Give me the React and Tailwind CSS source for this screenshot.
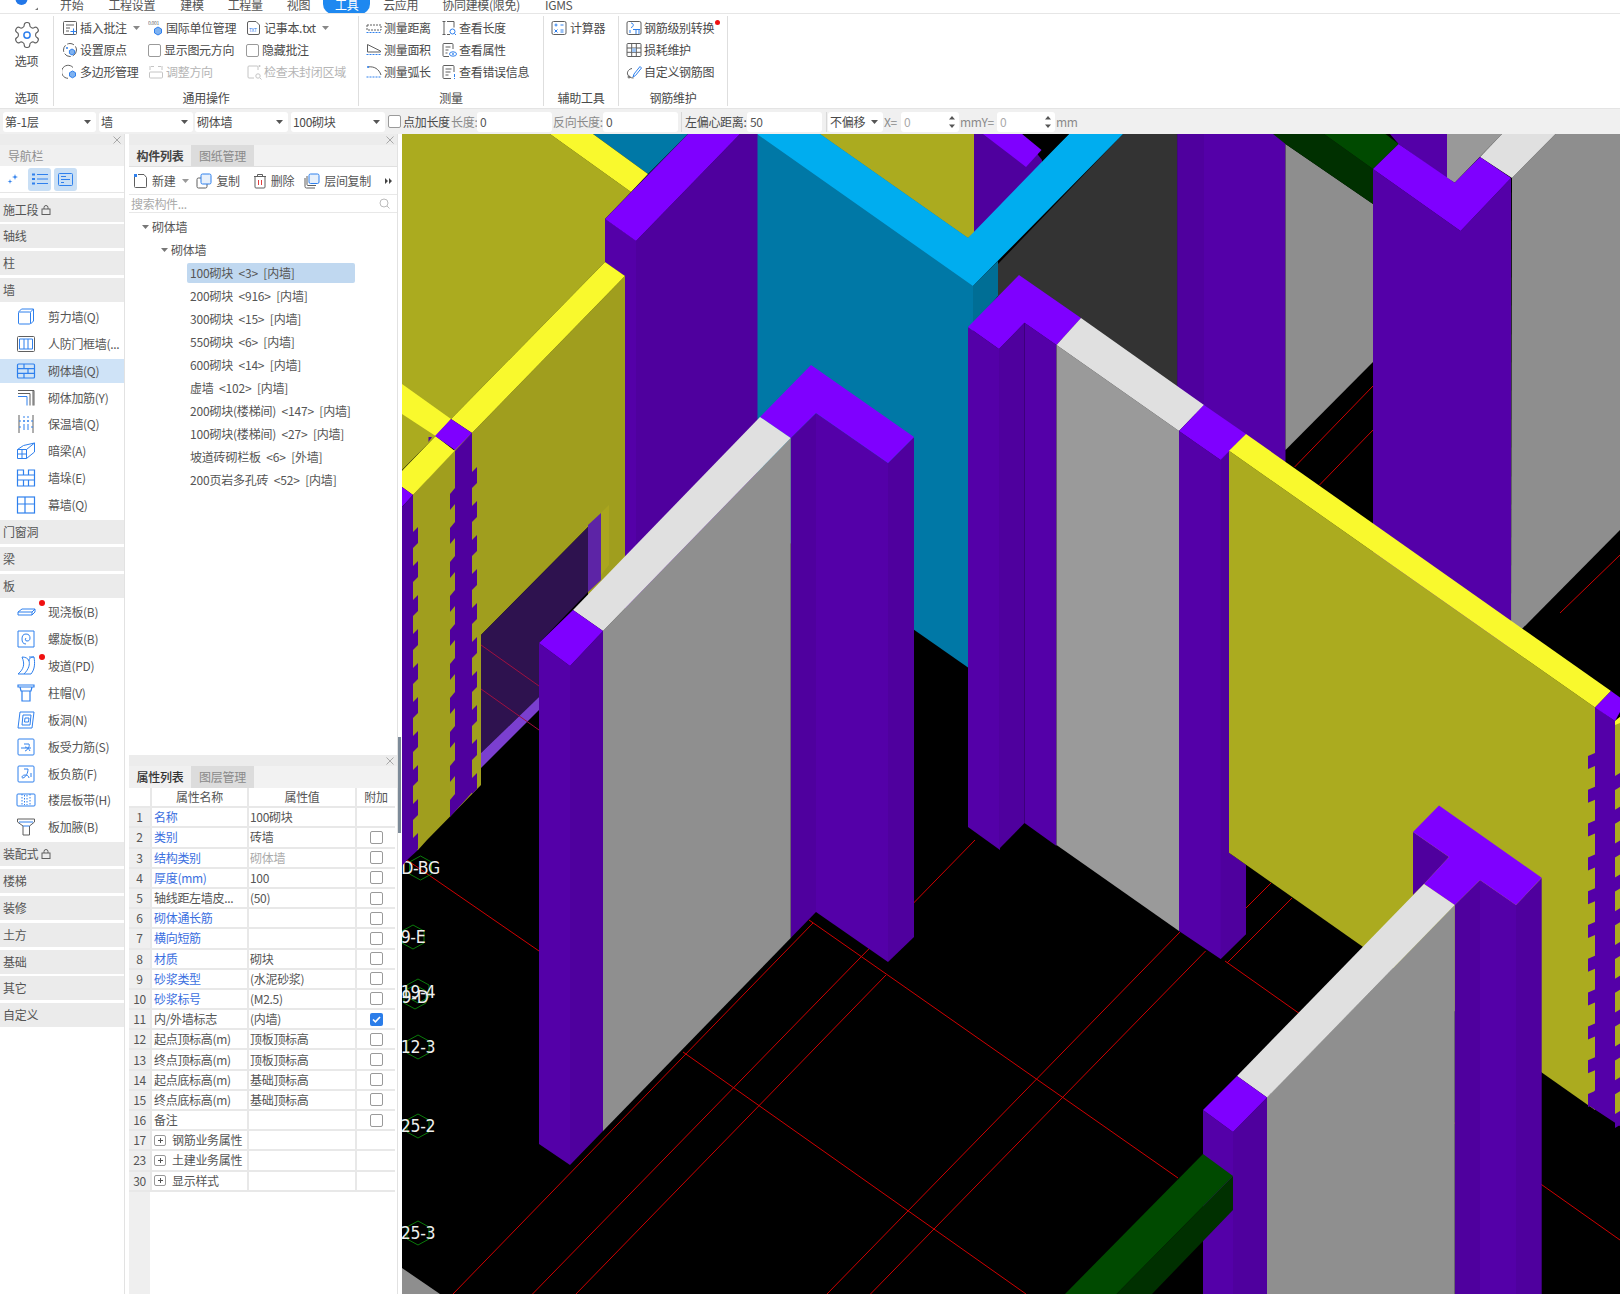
import React from "react";

const B = "#2f80ed";
const G = "#5f5f5f";
const L = "#c4c4c4";
const FONT = { fontFamily: '"Noto Sans CJK SC","Noto Sans",sans-serif' };

const Ic = ({ s = 16, v = 16, children }) => (
  <svg width={s} height={s} viewBox={`0 0 ${v} ${v}`} fill="none" stroke={G} strokeWidth="1" className="shrink-0">
    {children}
  </svg>
);

const Caret = ({ c = "#666" }) => (
  <svg width="7" height="4" viewBox="0 0 7 4" className="shrink-0"><path d="M0 0h7L3.5 4z" fill={c} /></svg>
);

const Box = ({ checked }) =>
  checked ? (
    <span className="w-[13px] h-[13px] rounded-[2px] bg-[#2b7de9] flex items-center justify-center shrink-0">
      <svg width="11" height="11" viewBox="0 0 11 11"><path d="M2 5.5l2.4 2.4L9 3" stroke="#fff" strokeWidth="1.6" fill="none" /></svg>
    </span>
  ) : (
    <span className="block w-[13px] h-[13px] rounded-[2px] border border-[#9a9a9a] bg-white shrink-0" />
  );

/* ribbon icons */
const iNote = <Ic><rect x="1.5" y="1.5" width="13" height="13" rx="1" /><path d="M4 5h8M4 8h4M4 11h3" /><path d="M11.5 8.5v6M8.5 11.5h6" stroke={B} /></Ic>;
const iUnit = <Ic><text x="0" y="5" fontSize="5" fill={G} stroke="none">0.001</text><path d="M10 7l3.5 2v4L10 15l-3.5-2V9z" fill="#7fb2f0" stroke={B} /></Ic>;
const iTxt = <Ic><path d="M3 1.5h7l3.5 3.5v8a1.5 1.5 0 0 1-1.5 1.5H3A1.5 1.5 0 0 1 1.5 13V3A1.5 1.5 0 0 1 3 1.5z" /><text x="3" y="12" fontSize="5" fill={B} stroke="none">TXT</text></Ic>;
const iOrigin = <Ic><circle cx="8" cy="8" r="6.5" strokeDasharray="7 2" /><path d="M10 7l2.6 1.5v3L10 13l-2.6-1.5v-3z" fill="#7fb2f0" stroke={B} /><circle cx="5" cy="6" r="1" fill={B} stroke="none" /></Ic>;
const iPoly = <Ic><path d="M11 3.5A6.5 6.5 0 1 0 6 14.3" /><path d="M10.5 7l3 1.7v3.4l-3 1.7-3-1.7V8.700z" fill="#7fb2f0" stroke={B} /></Ic>;
const iAdjust = <Ic><g stroke={L}><rect x="1.500" y="8" width="13" height="6" rx="1" /><path d="M3 2.500h3M10 2.500h3M2 2v4M14 2v4" /></g></Ic>;
const iCheck = <Ic><g stroke={L}><path d="M12 6v-3a1 1 0 0 0-1-1H3a1 1 0 0 0-1 1v10a1 1 0 0 0 1 1h5" /><circle cx="12" cy="12" r="2.200" /><path d="M14 14l1.500 1.500" /></g><circle cx="13.500" cy="2" r="1" fill={L} stroke="none" /></Ic>;
const iDist = <Ic><rect x="1" y="5" width="14" height="5" stroke={G} strokeDasharray="2 1" /><path d="M0.500 12.500h15" stroke={B} strokeDasharray="2 1" /></Ic>;
const iArea = <Ic><path d="M1.500 10V2.500l13 6.500v1z" /><path d="M0.500 12.500h15" stroke={B} strokeDasharray="2 1" /></Ic>;
const iArc = <Ic><path d="M2 3c6-1 11 2 13 8" /><path d="M0.500 13h15" stroke={B} strokeDasharray="2 1" /><circle cx="2" cy="3" r="1" fill={B} stroke="none" /></Ic>;
const iLen = <Ic><path d="M1.500 1.500h3M3 1.500v13M1.500 14.500h3" /><path d="M6 1.500h7v6M6 14.500h3" /><circle cx="11.500" cy="11.500" r="2.500" stroke={B} /><path d="M13.500 13.500l1.500 1.500" stroke={B} /></Ic>;
const iAttr = <Ic><path d="M12 7V2.500a1 1 0 0 0-1-1H3a1 1 0 0 0-1 1v11a1 1 0 0 0 1 1h5" /><path d="M4.500 5h5M4.500 8h3M4.500 11h2" /><ellipse cx="12" cy="12" rx="3.500" ry="2.200" stroke={B} /><circle cx="12" cy="12" r="0.900" fill={B} stroke="none" /></Ic>;
const iErr = <Ic><path d="M13 8V2.500a1 1 0 0 0-1-1H3a1 1 0 0 0-1 1v11a1 1 0 0 0 1 1h7" /><path d="M4.500 5h6M4.500 8h5M4.500 11h3" /><path d="M13.500 10v3M13.500 14v1" stroke={B} /></Ic>;
const iCalc = <Ic><rect x="1" y="1.500" width="14" height="13" rx="1.500" /><path d="M3.500 5h3M5 3.500v3M9.500 5h3M3.500 9.500l3 3M6.500 9.500l-3 3M9.500 10h3M9.500 12h3" stroke={B} /></Ic>;
const iRebarLv = <Ic><rect x="1" y="1.500" width="14" height="13" rx="1.500" /><path d="M5 3c3 0 3 4 0 4.500M7 9.500h7M4 10v3" stroke={B} /><path d="M10 9v5M13 9v5" stroke={B} /></Ic>;
const iLoss = <Ic><rect x="1" y="1.500" width="14" height="13" rx="1" /><path d="M5.700 1.500v13M10.300 1.500v13M1 6h14M1 10.300h14" /><rect x="6" y="6.300" width="4" height="3.800" fill="#9ec6f5" stroke="none" /></Ic>;
const iCustom = <Ic><path d="M7 13l1-3 6-7.500 1.500 1.500-6 7.500z" stroke={B} /><path d="M6 4.500C3 5 1 7.500 1.500 10c.5 2.500 3 4 6 4" /><circle cx="3" cy="13" r="1" /></Ic>;

const Item = ({ icon, text, off, gap = "gap-[2px]" }) => (
  <div className={`flex items-center h-[22px] whitespace-nowrap ${gap} ${off ? "text-[#b5b5b5]" : "text-[#4a4a4a]"}`}>
    {icon}
    <span>{text}</span>
  </div>
);

const Group = ({ label, w, pl, children }) => (
  <div className={`flex flex-col ${w} border-r border-[#dedede] my-[2px] shrink-0`}>
    <div className={`flex ${pl} pt-[1px] h-[76px]`}>{children}</div>
    <div className="text-center text-[#4a4a4a] leading-[16px] mt-[2px]">{label}</div>
  </div>
);

/* nav icons */
const n = {
  wall: <Ic s={20} v={20}><g stroke={B}><rect x="2.500" y="5" width="12" height="12" rx="1" /><path d="M2.500 5l3-3h12v12l-3 3M17.500 2l-3 3" /></g></Ic>,
  frame: <Ic s={20} v={20}><rect x="1.500" y="2.500" width="17" height="15" rx="1" /><path d="M3.500 5h13v10h-13zM8 5v10M12 5v10" stroke={B} /></Ic>,
  brick: <Ic s={20} v={20}><g stroke={B} strokeWidth="1.200"><rect x="1.500" y="3" width="17" height="14" rx="1" /><path d="M1.500 7.700h17M1.500 12.300h17M8 3v4.700M12 7.700v4.600M8 12.300V17" /></g></Ic>,
  bars: <Ic s={20} v={20}><path d="M2 2.500h15v15M2 5.500h12v12" /><path d="M2 8.500h9v9" stroke={B} /><path d="M17 2.500h1v15" /></Ic>,
  ins: <Ic s={20} v={20}><path d="M3 1v18M17 1v18" /><path d="M8 2v16M12 2v16M3 7h14M3 13h14" stroke={B} strokeDasharray="2 2" /></Ic>,
  beam: <Ic s={20} v={20}><path d="M1.500 8.500v9h9v-9h-9zM1.500 8.500l6-4 11-2.500v9l-8 6.500M10.500 8.500l8-6.500M1.500 13h9M6 8.500v9" stroke={B} /></Ic>,
  pier: <Ic s={20} v={20}><g stroke={B} strokeWidth="1.200"><path d="M1.500 2v16h17V2h-6v5h-5V2zM1.500 7h6M12.500 7h6v5h-17M7.500 12v6M12.500 12v6" /></g></Ic>,
  curtain: <Ic s={20} v={20}><g stroke={B} strokeWidth="1.200"><rect x="1.500" y="2" width="17" height="16" /><path d="M1.500 9h17M9 2v16" /></g></Ic>,
  slab: <Ic s={20} v={20}><path d="M2 10l4-3h13v3l-3 3H2zM2 10h14v3M16 10l3-3" stroke={B} /></Ic>,
  spiral: <Ic s={20} v={20}><path d="M2 2h16v16H2z" stroke={B} /><path d="M10 15c-3 0-4-2-4-5s1-5 4-5 4 2 4 4-1 3-3 3-2-2-1-3" stroke={B} /></Ic>,
  ramp: <Ic s={20} v={20}><path d="M6 1c3 0 6 1 7 4s0 8-5 13H2c6-5 7-10 4-17zM13 1h5c1 6 1 12-3 17H8M18 1c-1 0-5 0-5 4" stroke={B} /></Ic>,
  cap: <Ic s={20} v={20}><path d="M2 2h16v2H2zM4 4l1 4h10l1-4M6 8v10h8V8" stroke={B} strokeWidth="1.200" /></Ic>,
  hole: <Ic s={20} v={20}><path d="M4 2h14l-2 16H2zM7 5h8l-1 10H6zM9 8h4l-.5 4H8.500z" stroke={B} /></Ic>,
  rebar1: <Ic s={20} v={20}><rect x="2" y="2" width="16" height="16" rx="1" stroke={B} /><path d="M5 11h10M8 7h5c1 2-1 6-4 7M9 10c2 0 4 2 5 4" stroke={B} /></Ic>,
  rebar2: <Ic s={20} v={20}><rect x="2" y="2" width="16" height="16" rx="1" stroke={B} /><path d="M8 5h4c0 4-2 8-5 9-2 0-1-3 2-3 2 0 4 1 4 3M15 9v4" stroke={B} /></Ic>,
  strip: <Ic s={20} v={20}><rect x="1" y="4" width="18" height="12" rx="1" stroke={B} /><path d="M6 4v12M14 4v12M8.500 5v10M11 5v10" stroke={B} strokeDasharray="1.500 1.500" /></Ic>,
  haunch: <Ic s={20} v={20}><path d="M1.500 2h17v3l-5 4v9H7V9L1.500 5z" /><path d="M7 9h6.500M3 5h14" stroke={B} /></Ic>,
};

const Lock = () => (
  <Ic s={10} v={10}><rect x="1" y="4" width="8" height="5.500" /><path d="M3 4V2.500a2 2 0 0 1 4 0V4" /></Ic>
);

const nav = [
  { t: "施工段", lock: 1 }, { t: "轴线" }, { t: "柱" }, { t: "墙" },
  { i: n.wall, t: "剪力墙(Q)" }, { i: n.frame, t: "人防门框墙(..." }, { i: n.brick, t: "砌体墙(Q)", on: 1 }, { i: n.bars, t: "砌体加筋(Y)" },
  { i: n.ins, t: "保温墙(Q)" }, { i: n.beam, t: "暗梁(A)" }, { i: n.pier, t: "墙垛(E)" }, { i: n.curtain, t: "幕墙(Q)" },
  { t: "门窗洞" }, { t: "梁" }, { t: "板" },
  { i: n.slab, t: "现浇板(B)", dot: 1 }, { i: n.spiral, t: "螺旋板(B)" }, { i: n.ramp, t: "坡道(PD)", dot: 1 }, { i: n.cap, t: "柱帽(V)" },
  { i: n.hole, t: "板洞(N)" }, { i: n.rebar1, t: "板受力筋(S)" }, { i: n.rebar2, t: "板负筋(F)" }, { i: n.strip, t: "楼层板带(H)" }, { i: n.haunch, t: "板加腋(B)" },
  { t: "装配式", lock: 1 }, { t: "楼梯" }, { t: "装修" }, { t: "土方" }, { t: "基础" }, { t: "其它" }, { t: "自定义" },
];

const tree = ["100砌块 <3> [内墙]", "200砌块 <916> [内墙]", "300砌块 <15> [内墙]", "550砌块 <6> [内墙]", "600砌块 <14> [内墙]", "虚墙 <102> [内墙]", "200砌块(楼梯间) <147> [内墙]", "100砌块(楼梯间) <27> [内墙]", "坡道砖砌栏板 <6> [外墙]", "200页岩多孔砖 <52> [内墙]"];

const props = [
  ["1", "名称", "100砌块", 1, 0], ["2", "类别", "砖墙", 1, 1], ["3", "结构类别", "砌体墙", 1, 1, 1], ["4", "厚度(mm)", "100", 1, 1],
  ["5", "轴线距左墙皮...", "(50)", 0, 1], ["6", "砌体通长筋", "", 1, 1], ["7", "横向短筋", "", 1, 1], ["8", "材质", "砌块", 1, 1],
  ["9", "砂浆类型", "(水泥砂浆)", 1, 1], ["10", "砂浆标号", "(M2.5)", 1, 1], ["11", "内/外墙标志", "(内墙)", 0, 2],
  ["12", "起点顶标高(m)", "顶板顶标高", 0, 1], ["13", "终点顶标高(m)", "顶板顶标高", 0, 1], ["14", "起点底标高(m)", "基础顶标高", 0, 1], ["15", "终点底标高(m)", "基础顶标高", 0, 1], ["16", "备注", "", 0, 1],
];
const extra = [["17", "钢筋业务属性"], ["23", "土建业务属性"], ["30", "显示样式"]];

const Close = () => (
  <svg width="8" height="8" viewBox="0 0 8 8" className="shrink-0"><path d="M0.500 0.500l7 7M7.500 0.500l-7 7" stroke="#a8a8a8" /></svg>
);
const PanelHead = () => (
  <div className="h-[11px] bg-[#ececec] flex items-center justify-end pr-[3px] shrink-0"><Close /></div>
);

const Sel = ({ w, t, c }) => (
  <div className={`${w} h-[20px] bg-white rounded-[3px] flex items-center justify-between pl-[2px] pr-[5px] shrink-0 ${c || ""}`}>
    <span className="text-[#4a4a4a]">{t}</span><Caret c="#555" />
  </div>
);
const Inp = ({ w, t }) => (
  <div className={`${w} h-[20px] bg-white rounded-[3px] flex items-center pl-[3px] shrink-0 text-[#555]`}>{t}</div>
);
const Spin = ({ w }) => (
  <div className={`${w} h-[20px] bg-white rounded-[3px] flex items-center justify-between pl-[3px] pr-[4px] shrink-0 text-[#aaa]`}>
    <span>0</span>
    <svg width="6" height="14" viewBox="0 0 6 14"><path d="M3 1l3 3.500H0zM3 13l3-3.500H0z" fill="#555" /></svg>
  </div>
);

/* ---------- 3D scene ---------- */
const P = "#7f00ff", D = "#4f009e", M = "#5400a8";
const teeth = (x0, x1, y0, cnt, b, p = 34, h = 16) =>
  Array.from({ length: cnt }, (_, i) => {
    const y = y0 + i * p;
    return `${x0},${y + b} ${x1},${y} ${x1},${y + h} ${x0},${y + h + b}`;
  });

const poly = [
  ["#abab1f", "402,134 550,134 631,192 605,219 605,262 451,419 435.600,436 402,470"],
  ["#0078a6", "593,134 688,134 648,174"],
  ["#f9f92d", "550,134 593,134 648,174 631,192"],
  ["#a09e1e", "413,495 454,450 472,433 625,276 625,560 588,597 588,527 481,635 481,785 427,840 418,850 413,850"],
  ["#2e124f", "481,635 588,527 588,592 539,643 539,697 481,753"],
  ["#7b3fd0", "481,753 539,697 539,710 481,768"],
  ["#5d24a6", "588,525 601,513 601,580 588,592"],
  ["#aaa51e", "601,513 609,505 609,565 601,575"],
  ["#0078a6", "757,134 973,134 973,671 757,520"],
  ["#abab1f", "820,134 974,134 974,233 968,238"],
  [D, "974,134 1042,134 1042,170 974,240"],
  ["#333333", "998,264 1123,134 1177.500,134 1177.500,410 1000,300 998,296"],
  ["#006e95", "973,286 998,261 998,296 973,325"],
  ["#00adef", "757,134 820,134 968,238 1069,134 1123,134 973,286"],
  ["#000000", "1022,134 1069,134 1042,160"],
  [P, "983,134 1022,134 1041.500,150 1026,167"],
  [M, "1177.500,134 1285.500,134 1285.500,480 1177.500,400"],
  [D, "1177.500,134 1204,134 1204,420 1177.500,400"],
  ["#8e8e8e", "1285.500,144 1373,204 1373,362 1285.500,450"],
  ["#003000", "1273,134 1324,134 1373,169 1373,204 1285.500,144"],
  ["#004a00", "1324,134 1385.500,134 1398.600,144 1373,169"],
  [M, "1390,134 1447,134 1447,178.600 1398.600,144"],
  ["#999999", "1447,134 1502,134 1454.700,182.700 1447,178"],
  ["#8e8e8e", "1512,178 1555.500,134 1620,134 1620,530 1511,640"],
  ["#e0e0e0", "1502,134 1555.500,134 1512,178 1480,157"],
  [M, "1373,169 1460.600,231 1511,178 1511,800 1373,800"],
  [P, "1373,169 1398.600,144 1454.700,182.700 1480,157 1511,178 1460.600,231"],
  // pillar 2
  [M, "968,327 999,349 1000,850 968,827"],
  [D, "999,349 1024.500,322.700 1024.500,823 999,849"],
  [M, "1024.500,322.700 1056.500,345 1056.500,846 1024.500,823"],
  [P, "968,327 1019,275 1081,318 1056.500,345 1024.500,322.700 999,349"],
  ["#9a9a9a", "1056.500,345 1179,431 1179,931 1056.500,845"],
  ["#e0e0e0", "1056.500,345 1081,318 1204,405 1179,431"],
  [M, "1179,431 1220.600,460 1229,451 1229,853 1246,865 1246,934 1220.600,959 1179,931"],
  [D, "1220.600,460 1229,451 1229,853 1246,865 1246,934 1220.600,959"],
  [P, "1204,405 1246,434 1220.600,460 1179,431"],
  ["#abab1f", "1229,450.700 1595,707.600 1595,1110 1229,852.700"],
  ["#f9f92d", "1246,434 1611,691 1595,707.600 1229,450.700"],
  [M, "1595,707 1615,721 1615,1115 1620,1118 1620,1126 1588,1105 1595,1090"],
  ["#abab1f", "1615,721 1620,717 1620,1118 1615,1115"],
  ["#f9f92d", "1615,721 1620,717 1620,723 1615,725"],
  [P, "1611,691 1620,697.500 1620,712 1615,721 1595,707.600"],
  // pillar 4
  [D, "1413,832 1449,857 1424,884 1413,895"],
  [D, "1454.700,905 1480,880 1480,1294 1454.700,1294"],
  [M, "1480,880 1516,905 1516,1294 1480,1294"],
  [D, "1516,905 1541.700,878 1541.700,1294 1516,1294"],
  [P, "1413,832 1439,805.500 1541.700,877.700 1516,905 1480,880 1454.700,905 1424,884 1449,857"],
  ["#8f8f8f", "1454.700,905 1454.700,1294 1267,1294 1267,1097"],
  ["#e0e0e0", "1424,884 1454.700,905 1267,1097.500 1237,1076"],
  // pillar 5
  [M, "1203,1110 1233,1132 1233,1294 1203,1294"],
  [D, "1233,1132 1267,1097.500 1267,1294 1233,1294"],
  [P, "1237,1076 1267,1097.500 1233,1132 1203,1110"],
  ["#004a00", "1203,1154 1233,1176 1116.600,1294 1065,1294"],
  ["#003000", "1233,1176 1233,1210 1152,1294 1116.600,1294"],
  // big left column
  [D, "605,219 636,241 740,134 757.500,134 757.500,700 625,700 625,276 605,262"],
  [M, "605,219 636,241 636,700 625,700 625,276 605,262"],
  [P, "688,134 740,134 636,241 605,219"],
  ["#f9f92d", "605,262 625,276 472,433 451,419"],
  ["#f9f92d", "402,384 451,419 435.600,436 402,414"],
  ["#f9f92d", "435.600,436 454.600,450.700 413,495 402,487 402,470.700"],
  [D, "428.500,437 432,437 428.500,442"],
  [P, "451,419 472,433 455,450 435,436"],
  [P, "402,487 413,495 402,507"],
  [D, "402,507 413,495 413,850 418,850 407,860 402,866"],
  [D, "455,451 472,433 472,785 477,787 450,817 450,800 455,800"],
  // pillar 1 + gray
  [D, "790.700,438 816,413 816,912 790.700,938"],
  [M, "816,413 888,463 888,962 816,912"],
  [D, "888,463 914,437 914,937 888,962"],
  [P, "760,417 811,365 914,437 888,463 816,413 790.700,438"],
  ["#8f8f8f", "790.700,438 790.700,938 603,1131 603,631"],
  ["#e0e0e0", "760,417 790.700,438 603,631 573,610"],
  [M, "539,643 570,666 570,1165 539,1144"],
  [D, "570,666 603,631 603,1131 570,1165"],
  [P, "573,610 603,631 570,666 539,643"],
];

const reds = [
  "407,860 539,951", "813,923 453,1294", "975,840 532.500,1294", "886,975 576,1294",
  "809,920 1178,1178", "683,1052 1026,1294", "1180,932 827,1294", "1205.600,951 870.500,1294",
  "1225,961 1620,1240", "1294.600,467 1373,386", "1319.500,485 1373,430", "1271,883 1245,909", "1292,898 1227,963",
  "1560,613 1620,555",
];

const hex = (x, y) => `${x},${y - 12} ${x + 11},${y - 6} ${x + 11},${y + 6} ${x},${y + 12} ${x - 11},${y + 6} ${x - 11},${y - 6}`;
const labels = [
  [420.500, 868, "D-BG", 874], [413, 937, "9-E", 943], [418, 991, "19-4", 998], [415, 997, "9-D", 1003],
  [418, 1047, "12-3", 1053], [418, 1126, "25-2", 1132], [418, 1233, "25-3", 1239],
];

const Scene = () => (
  <svg width="1218" height="1160" viewBox="402 134 1218 1160" className="block bg-black">
    {reds.map((r, i) => {
      const [a, b] = r.split(" ");
      const [x1, y1] = a.split(",");
      const [x2, y2] = b.split(",");
      return <line key={i} x1={x1} y1={y1} x2={x2} y2={y2} stroke="#d00000" strokeWidth="1" />;
    })}
    <path d="M402 1268L440 1294H402z" fill="#8e8e8e" />
    {labels.map(([x, y]) => <polygon key={`${x}${y}`} points={hex(x, y)} fill="none" stroke="#0a7a0a" />)}
    {labels.map(([x, , t, ty]) => (
      <text key={t} x={x} y={ty} textAnchor="middle" fontSize="17.500" fill="#eeeeee" fontFamily="'DejaVu Sans Condensed','DejaVu Sans',sans-serif">{t}</text>
    ))}
    {poly.map(([f, pts], i) => <polygon key={i} points={pts} fill={f} />)}
    <line x1="481" y1="645" x2="539" y2="686" stroke="#a01040" />
    <line x1="481" y1="689" x2="539" y2="730" stroke="#a01040" />
    {teeth(413, 418, 527, 10, 5).map((p, i) => <polygon key={`a${i}`} points={p} fill={D} />)}
    {teeth(455, 450, 494, 10, -6).map((p, i) => <polygon key={`b${i}`} points={p} fill={D} />)}
    {teeth(472, 477, 467, 10, 5).map((p, i) => <polygon key={`c${i}`} points={p} fill={D} />)}
    {teeth(1595, 1588, 756, 11, -3, 33.800, 13).map((p, i) => <polygon key={`d${i}`} points={p} fill={M} />)}
    {teeth(1615, 1620, 773, 11, 3, 33.800, 14).map((p, i) => <polygon key={`e${i}`} points={p} fill={M} />)}
  </svg>
);

const Check = ({ v }) => (v === 0 ? null : <Box checked={v === 2} />);

export default function App() {
  return (
    <div style={FONT} className="relative w-[1620px] h-[1294px] overflow-hidden bg-white text-[12px] leading-[16px] tracking-[-0.3px] text-[#4a4a4a]">
      {/* menu */}
      <div className="h-[14px] border-b border-[#e6e6e6] flex overflow-hidden leading-[10px] text-[#555]">
        <svg width="44" height="13" viewBox="0 0 44 13" className="shrink-0 ml-[14px]">
          <circle cx="7.500" cy="-1" r="6" fill="#2277e8" />
          <path d="M24 7.500v2.500h-3z" fill="#777" />
        </svg>
        <span className="ml-[2px]">开始</span>
        <span className="ml-[25px]">工程设置</span>
        <span className="ml-[25px]">建模</span>
        <span className="ml-[24px]">工程量</span>
        <span className="ml-[24px]">视图</span>
        <span className="ml-[13px] w-[47px] h-[14px] bg-[#1e88f0] rounded-b-[10px] text-white text-center">工具</span>
        <span className="ml-[13px]">云应用</span>
        <span className="ml-[24px]">协同建模(限免)</span>
        <span className="ml-[25px]">IGMS</span>
      </div>

      {/* ribbon */}
      <div className="h-[94px] flex">
        <Group label="选项" w="w-[54px]" pl="pl-0">
          <div className="w-full flex flex-col items-center pt-[3px] gap-[3px]">
            <svg width="30" height="30" viewBox="0 0 24 24" fill="none" stroke={G} strokeWidth="0.900">
              <path d="M12.220 2h-.44a2 2 0 0 0-2 2v.18a2 2 0 0 1-1 1.730l-.43.25a2 2 0 0 1-2 0l-.15-.08a2 2 0 0 0-2.730.73l-.22.38a2 2 0 0 0 .73 2.730l.15.1a2 2 0 0 1 1 1.720v.51a2 2 0 0 1-1 1.740l-.15.09a2 2 0 0 0-.73 2.730l.22.38a2 2 0 0 0 2.730.73l.15-.08a2 2 0 0 1 2 0l.43.25a2 2 0 0 1 1 1.730V20a2 2 0 0 0 2 2h.44a2 2 0 0 0 2-2v-.18a2 2 0 0 1 1-1.730l.43-.25a2 2 0 0 1 2 0l.15.08a2 2 0 0 0 2.730-.73l.22-.39a2 2 0 0 0-.73-2.730l-.15-.08a2 2 0 0 1-1-1.740v-.5a2 2 0 0 1 1-1.740l.15-.09a2 2 0 0 0 .73-2.730l-.22-.38a2 2 0 0 0-2.730-.73l-.15.08a2 2 0 0 1-2 0l-.43-.25a2 2 0 0 1-1-1.730V4a2 2 0 0 0-2-2z" />
              <circle cx="12" cy="12" r="2.500" stroke={B} strokeWidth="1.200" />
            </svg>
            <span>选项</span>
          </div>
        </Group>
        <Group label="通用操作" w="w-[305px]" pl="pl-[8px]">
          <div className="w-[86px] shrink-0">
            <div className="flex items-center h-[22px] gap-[2px] whitespace-nowrap">{iNote}<span>插入批注</span><span className="ml-[4px]"><Caret c="#888" /></span></div>
            <Item icon={iOrigin} text="设置原点" />
            <Item icon={iPoly} text="多边形管理" />
          </div>
          <div className="w-[98px] shrink-0">
            <Item icon={iUnit} text="国际单位管理" />
            <Item icon={<Box />} text="显示图元方向" gap="gap-[3px]" />
            <Item icon={iAdjust} text="调整方向" off />
          </div>
          <div>
            <div className="flex items-center h-[22px] gap-[2px] whitespace-nowrap">{iTxt}<span>记事本.txt</span><span className="ml-[4px]"><Caret c="#888" /></span></div>
            <Item icon={<Box />} text="隐藏批注" gap="gap-[3px]" />
            <Item icon={iCheck} text="检查未封闭区域" off />
          </div>
        </Group>
        <Group label="测量" w="w-[185px]" pl="pl-[7px]">
          <div className="w-[75px] shrink-0">
            <Item icon={iDist} text="测量距离" />
            <Item icon={iArea} text="测量面积" />
            <Item icon={iArc} text="测量弧长" />
          </div>
          <div>
            <Item icon={iLen} text="查看长度" />
            <Item icon={iAttr} text="查看属性" />
            <Item icon={iErr} text="查看错误信息" />
          </div>
        </Group>
        <Group label="辅助工具" w="w-[75px]" pl="pl-[7px]">
          <div><Item icon={iCalc} text="计算器" gap="gap-[3px]" /></div>
        </Group>
        <Group label="钢筋维护" w="w-[109px]" pl="pl-[7px]">
          <div className="relative">
            <Item icon={iRebarLv} text="钢筋级别转换" />
            <span className="absolute right-[-6px] top-[3px] w-[5px] h-[5px] rounded-full bg-[#f01010]" />
            <Item icon={iLoss} text="损耗维护" />
            <Item icon={iCustom} text="自定义钢筋图" />
          </div>
        </Group>
      </div>

      {/* toolbar */}
      <div className="h-[26px] bg-[#f0f0f0] border-t border-[#e4e4e4] flex items-center pl-[3px] whitespace-nowrap text-[#4a4a4a]">
        <Sel w="w-[93px]" t="第-1层" />
        <Sel w="w-[94px]" t="墙" c="ml-[3px]" />
        <Sel w="w-[93px]" t="砌体墙" c="ml-[2px]" />
        <Sel w="w-[94px]" t="100砌块" c="ml-[3px]" />
        <span className="ml-[3px]"><Box /></span>
        <span className="ml-[2px] w-[48px] shrink-0">点加长度</span>
        <span className="w-[26px] shrink-0 text-[#8a8a8a]">长度:</span>
        <Inp w="w-[75px]" t="0" />
        <span className="ml-[1px] w-[50px] shrink-0 text-[#8a8a8a]">反向长度:</span>
        <Inp w="w-[75px]" t="0" />
        <span className="ml-[3px] w-px h-[20px] bg-[#d8d8d8] shrink-0" />
        <span className="ml-[3px] w-[62px] shrink-0">左偏心距离:</span>
        <Inp w="w-[75px]" t="50" />
        <span className="ml-[4px] w-px h-[20px] bg-[#d8d8d8] shrink-0" />
        <Sel w="w-[55px]" t="不偏移" c="ml-[1px]" />
        <span className="ml-[1px] w-[17px] shrink-0 text-[#8a8a8a]">X=</span>
        <Spin w="w-[58px]" />
        <span className="ml-[1px] w-[37px] shrink-0 text-[#8a8a8a]">mmY=</span>
        <Spin w="w-[58px]" />
        <span className="ml-[1px] text-[#8a8a8a]">mm</span>
      </div>

      {/* main */}
      <div className="flex h-[1160px]">
        {/* nav */}
        <div className="w-[125px] shrink-0 border-r border-[#e2e2e2] flex flex-col">
          <PanelHead />
          <div className="h-[21px] bg-[#f0f0f0] flex items-center pl-[8px] text-[#8f8f8f] shrink-0">导航栏</div>
          <div className="h-[27px] flex items-center pl-[7px] gap-[3px] border-b border-[#e6e6e6] shrink-0">
            <svg width="11" height="11" viewBox="0 0 11 11" className="mr-[7px]" fill={B}><path d="M8 0l.7 2.300L11 3l-2.300.7L8 6l-.7-2.300L5 3l2.300-.7zM3 5l.6 1.900L5.500 7.500l-1.900.6L3 10l-.6-1.900L.5 7.500l1.900-.6z" /></svg>
            <span className="w-[23px] h-[23px] bg-[#c9dff5] rounded-[3px] flex items-center justify-center">
              <svg width="16" height="12" viewBox="0 0 16 12"><path d="M5 1.500h11M5 6h11M5 10.500h11" stroke={B} /><path d="M0 .5h3v2H0zM0 5h3v2H0zM0 9.500h3v2H0z" fill={B} /></svg>
            </span>
            <span className="w-[23px] h-[23px] bg-[#c9dff5] rounded-[3px] flex items-center justify-center">
              <svg width="15" height="13" viewBox="0 0 15 13" fill="none" stroke={B}><rect x=".5" y=".5" width="14" height="12" rx="1" /><path d="M3 3.500h5M3 6.500h9M3 9.500h3" /></svg>
            </span>
          </div>
          <div className="flex flex-col gap-[2.870px] pt-[4.500px]">
            {nav.map((r) =>
              r.i ? (
                <div key={r.t} className={`relative h-[24px] flex items-center pl-[16px] whitespace-nowrap ${r.on ? "bg-[#cfe3f7]" : ""}`}>
                  {r.i}
                  <span className="ml-[12px] text-[#555]">{r.t}</span>
                  {r.dot ? <span className="absolute left-[39px] top-[0px] w-[6px] h-[6px] rounded-full bg-[#f01010]" /> : null}
                </div>
              ) : (
                <div key={r.t} className="h-[24px] bg-[#ebebeb] flex items-center pl-[3px] gap-[3px] text-[#555]">
                  <span>{r.t}</span>{r.lock ? <Lock /> : null}
                </div>
              )
            )}
          </div>
        </div>

        {/* middle */}
        <div className="w-[269px] ml-[4px] shrink-0 flex flex-col border-r border-[#e2e2e2]">
          <div className="h-[616px] flex flex-col shrink-0">
            <PanelHead />
            <div className="h-[22px] bg-[#f2f2f2] flex shrink-0 border-b border-[#e0e0e0]">
              <span className="w-[62px] bg-[#f0f0f0] flex items-center justify-center font-bold text-[#444]">构件列表</span>
              <span className="w-[63px] bg-[#dcdcdc] flex items-center justify-center text-[#8a8a8a]">图纸管理</span>
            </div>
            <div className="h-[27px] flex items-center pl-[4px] whitespace-nowrap shrink-0 text-[#555]">
              <Ic><path d="M1.500 3v10.500a1 1 0 0 0 1 1h10a1 1 0 0 0 1-1V4.500L11 1.500H5" /><rect x="1" y="1" width="3" height="3" fill={B} stroke="none" /></Ic>
              <span className="ml-[3px]">新建</span>
              <span className="ml-[7px]"><Caret c="#999" /></span>
              <span className="ml-[7px]"><Ic><rect x="1" y="5" width="10" height="10" rx="1.500" /><rect x="5" y="1" width="10" height="10" rx="1.500" fill="#e7f0fb" stroke={B} /></Ic></span>
              <span className="ml-[4px]">复制</span>
              <span className="ml-[12px]"><Ic><path d="M2 3.500h12M5.500 3.500V1.500h5v2M3 3.500v10.500a1 1 0 0 0 1 1h8a1 1 0 0 0 1-1V3.500" /><path d="M6.500 7v5M9.500 7v5" stroke="#e04040" /></Ic></span>
              <span className="ml-[3px]">删除</span>
              <span className="ml-[10px]"><Ic><path d="M1 5v8.500a1.500 1.500 0 0 0 1.500 1.500H11M3 3v8.500a1 1 0 0 0 1 1h8" /><rect x="5" y="1" width="10" height="9.500" rx="1.500" fill="#e7f0fb" stroke={B} /></Ic></span>
              <span className="ml-[4px]">层间复制</span>
              <span className="ml-[12px] w-[11px] h-[20px] bg-white rounded-[3px] flex items-center justify-center shrink-0">
                <svg width="7" height="6" viewBox="0 0 7 6"><path d="M0 0l3 3-3 3zM4 0l3 3-3 3z" fill="#444" /></svg>
              </span>
            </div>
            <div className="h-[19px] flex items-center justify-between pl-[2px] pr-[7px] border-y border-[#e8e8e8] shrink-0 text-[#aaaaaa]">
              <span>搜索构件...</span>
              <svg width="11" height="11" viewBox="0 0 11 11" fill="none" stroke="#bbb"><circle cx="5" cy="5" r="4" /><path d="M8 8l2.500 2.500" /></svg>
            </div>
            <div className="pt-[2px] text-[#555] tracking-[-0.2px] [word-spacing:3px] whitespace-nowrap">
              <div className="h-[23px] flex items-center pl-[13px] gap-[1px]"><Caret c="#777" /><span className="ml-[2px]">砌体墙</span></div>
              <div className="h-[23px] flex items-center pl-[32px] gap-[1px]"><Caret c="#777" /><span className="ml-[2px]">砌体墙</span></div>
              {tree.map((t, i) => (
                <div key={t} className="h-[23px] flex items-center pl-[58px]">
                  <span className={`h-[20px] flex items-center pl-[3px] rounded-[2px] ${i === 0 ? "w-[168px] bg-[#c0d8f0]" : ""}`}>{t}</span>
                </div>
              ))}
            </div>
          </div>

          {/* properties */}
          <div className="mt-[5px] flex-1 flex flex-col min-h-0">
            <PanelHead />
            <div className="h-[22px] bg-[#f2f2f2] flex shrink-0">
              <span className="w-[62px] bg-[#f0f0f0] flex items-center justify-center font-medium text-[#333]">属性列表</span>
              <span className="w-[63px] bg-[#dcdcdc] flex items-center justify-center text-[#8a8a8a]">图层管理</span>
            </div>
            <div className="flex-1 relative text-[#555]">
              <div className="grid grid-cols-[21px_97px_108px_40px] auto-rows-[20.200px] w-[266px]">
                <div className="border-b-2 border-[#e8e8e8]" />
                <div className="border-l-2 border-b-2 border-[#e8e8e8] flex items-center justify-center">属性名称</div>
                <div className="border-l-2 border-b-2 border-[#e8e8e8] flex items-center justify-center">属性值</div>
                <div className="border-l-2 border-b-2 border-[#e8e8e8] flex items-center justify-center">附加</div>
                {props.map(([no, name, val, link, chk, dim]) => (
                  <React.Fragment key={no}>
                    <div className="bg-[#efefef] border-b-2 border-[#e8e8e8] flex items-center justify-center text-[#555]">{no}</div>
                    <div className={`border-l-2 border-b-2 border-[#e8e8e8] flex items-center pl-[2px] overflow-hidden whitespace-nowrap ${link ? "text-[#3b6fe0]" : ""}`}>{name}</div>
                    <div className={`border-l-2 border-b-2 border-[#e8e8e8] flex items-center pl-[1px] ${dim ? "text-[#aaa]" : ""}`}>{val}</div>
                    <div className="border-l-2 border-b-2 border-[#e8e8e8] flex items-center justify-center"><Check v={chk} /></div>
                  </React.Fragment>
                ))}
                {extra.map(([no, name]) => (
                  <React.Fragment key={no}>
                    <div className="bg-[#efefef] border-b-2 border-[#e8e8e8] flex items-center justify-center">{no}</div>
                    <div className="border-l-2 border-b-2 border-[#e8e8e8] flex items-center pl-[2px] whitespace-nowrap">
                      <span className="w-[12px] h-[11px] rounded-[2px] border border-[#999] flex items-center justify-center mr-[6px] shrink-0">
                        <svg width="7" height="7" viewBox="0 0 7 7"><path d="M3.500 1v5M1 3.500h5" stroke="#555" /></svg>
                      </span>
                      {name}
                    </div>
                    <div className="border-l-2 border-b-2 border-[#e8e8e8]" />
                    <div className="border-l-2 border-b-2 border-[#e8e8e8]" />
                  </React.Fragment>
                ))}
              </div>
              <div className="absolute left-0 top-[404px] bottom-0 w-[21px] bg-[#efefef]" />
            </div>
          </div>
        </div>

        <div className="ml-[4px] shrink-0"><Scene /></div>
      </div>

      {/* splitter thumb */}
      <div className="absolute left-[398px] top-[737px] w-[3px] h-[96px] bg-[#7d8b99]" />
    </div>
  );
}
